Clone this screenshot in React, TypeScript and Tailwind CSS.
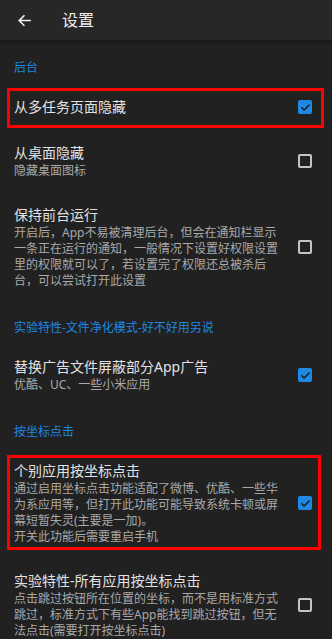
import React from 'react';

type Item = {
  title: string;
  summary?: string[];
  checked: boolean;
  marked?: 'top' | 'bottom';
};

type Section = {
  label: string;
  items: Item[];
};

const sections: Section[] = [
  {
    label: '后台',
    items: [
      { title: '从多任务页面隐藏', checked: true, marked: 'top' },
      { title: '从桌面隐藏', summary: ['隐藏桌面图标'], checked: false },
      {
        title: '保持前台运行',
        summary: [
          '开启后，App不易被清理后台，但会在通知栏显示一条正在运行的通知，一般情况下设置好权限设置里的权限就可以了，若设置完了权限还总被杀后台，可以尝试打开此设置',
        ],
        checked: false,
      },
    ],
  },
  {
    label: '实验特性-文件净化模式-好不好用另说',
    items: [
      { title: '替换广告文件屏蔽部分App广告', summary: ['优酷、UC、一些小米应用'], checked: true },
    ],
  },
  {
    label: '按坐标点击',
    items: [
      {
        title: '个别应用按坐标点击',
        summary: [
          '通过启用坐标点击功能适配了微博、优酷、一些华为系应用等，但打开此功能可能导致系统卡顿或屏幕短暂失灵(主要是一加)。',
          '开关此功能后需要重启手机',
        ],
        checked: true,
        marked: 'bottom',
      },
      {
        title: '实验特性-所有应用按坐标点击',
        summary: [
          '点击跳过按钮所在位置的坐标，而不是用标准方式跳过，标准方式下有些App能找到跳过按钮，但无法点击(需要打开按坐标点击)',
        ],
        checked: false,
      },
    ],
  },
];

const CheckBox: React.FC<{ checked: boolean }> = ({ checked }) =>
  checked ? (
    <div className="w-[14px] h-[14px] rounded-[2px] bg-[#1e88e5] flex items-center justify-center">
      <svg width="11" height="11" viewBox="0 0 24 24" fill="none" stroke="#1c1c1c" strokeWidth={3.4} strokeLinecap="round" strokeLinejoin="round">
        <path d="M4 12.5l5 5L20 6.5" />
      </svg>
    </div>
  ) : (
    <div className="w-[14px] h-[14px] rounded-[2px] border-2 border-[#c4c4c4]" />
  );

const Row: React.FC<{ item: Item }> = ({ item }) => (
  <div className="relative flex items-center pl-[14px] pr-[20px] py-[13px]">
    {/* annotation frame drawn over the row */}
    {item.marked === 'top' && (
      <div className="absolute left-[7px] right-[8px] top-[4px] bottom-[2px] border-[3px] border-[#ff0000] pointer-events-none" />
    )}
    {item.marked === 'bottom' && (
      <div className="absolute left-[7px] right-[11px] top-[7px] bottom-[8px] border-[3px] border-[#ff0000] pointer-events-none" />
    )}
    <div className="flex-1 pr-[16px]">
      <div className="text-[14px] leading-[20px] text-[#e2e2e2]">{item.title}</div>
      {item.summary?.map((line, i) => (
        <div key={i} className="text-[12px] leading-[16px] text-[#a9a9a9]">
          {line}
        </div>
      ))}
    </div>
    <CheckBox checked={item.checked} />
  </div>
);

export default function App() {
  return (
    <div
      className="w-[332px] h-[639px] overflow-hidden bg-[#212121]"
      style={{ fontFamily: '"Noto Sans", "Noto Sans CJK SC", sans-serif' }}
    >
      {/* Toolbar */}
      <div className="h-[40px] bg-[#272727] flex items-center shadow-[0_2px_4px_rgba(0,0,0,0.35)] relative z-10">
        <div className="w-[62px] pl-[17px] flex items-center">
          <svg width="15" height="15" viewBox="0 0 24 24" fill="none" stroke="#f0f0f0" strokeWidth={2.6} strokeLinecap="square">
            <path d="M21 12H4M11 4.5L3.5 12l7.5 7.5" />
          </svg>
        </div>
        <div className="text-[16px] text-[#f0f0f0]">设置</div>
      </div>

      {sections.map((section, idx) => (
        <div key={section.label}>
          <div
            className={`pl-[14px] pb-[8px] text-[12px] leading-[16px] text-[#1e88e5] ${
              idx === 0 ? 'pt-[20px]' : 'pt-[18px]'
            }`}
          >
            {section.label}
          </div>
          {section.items.map(item => (
            <Row key={item.title} item={item} />
          ))}
        </div>
      ))}
    </div>
  );
}
